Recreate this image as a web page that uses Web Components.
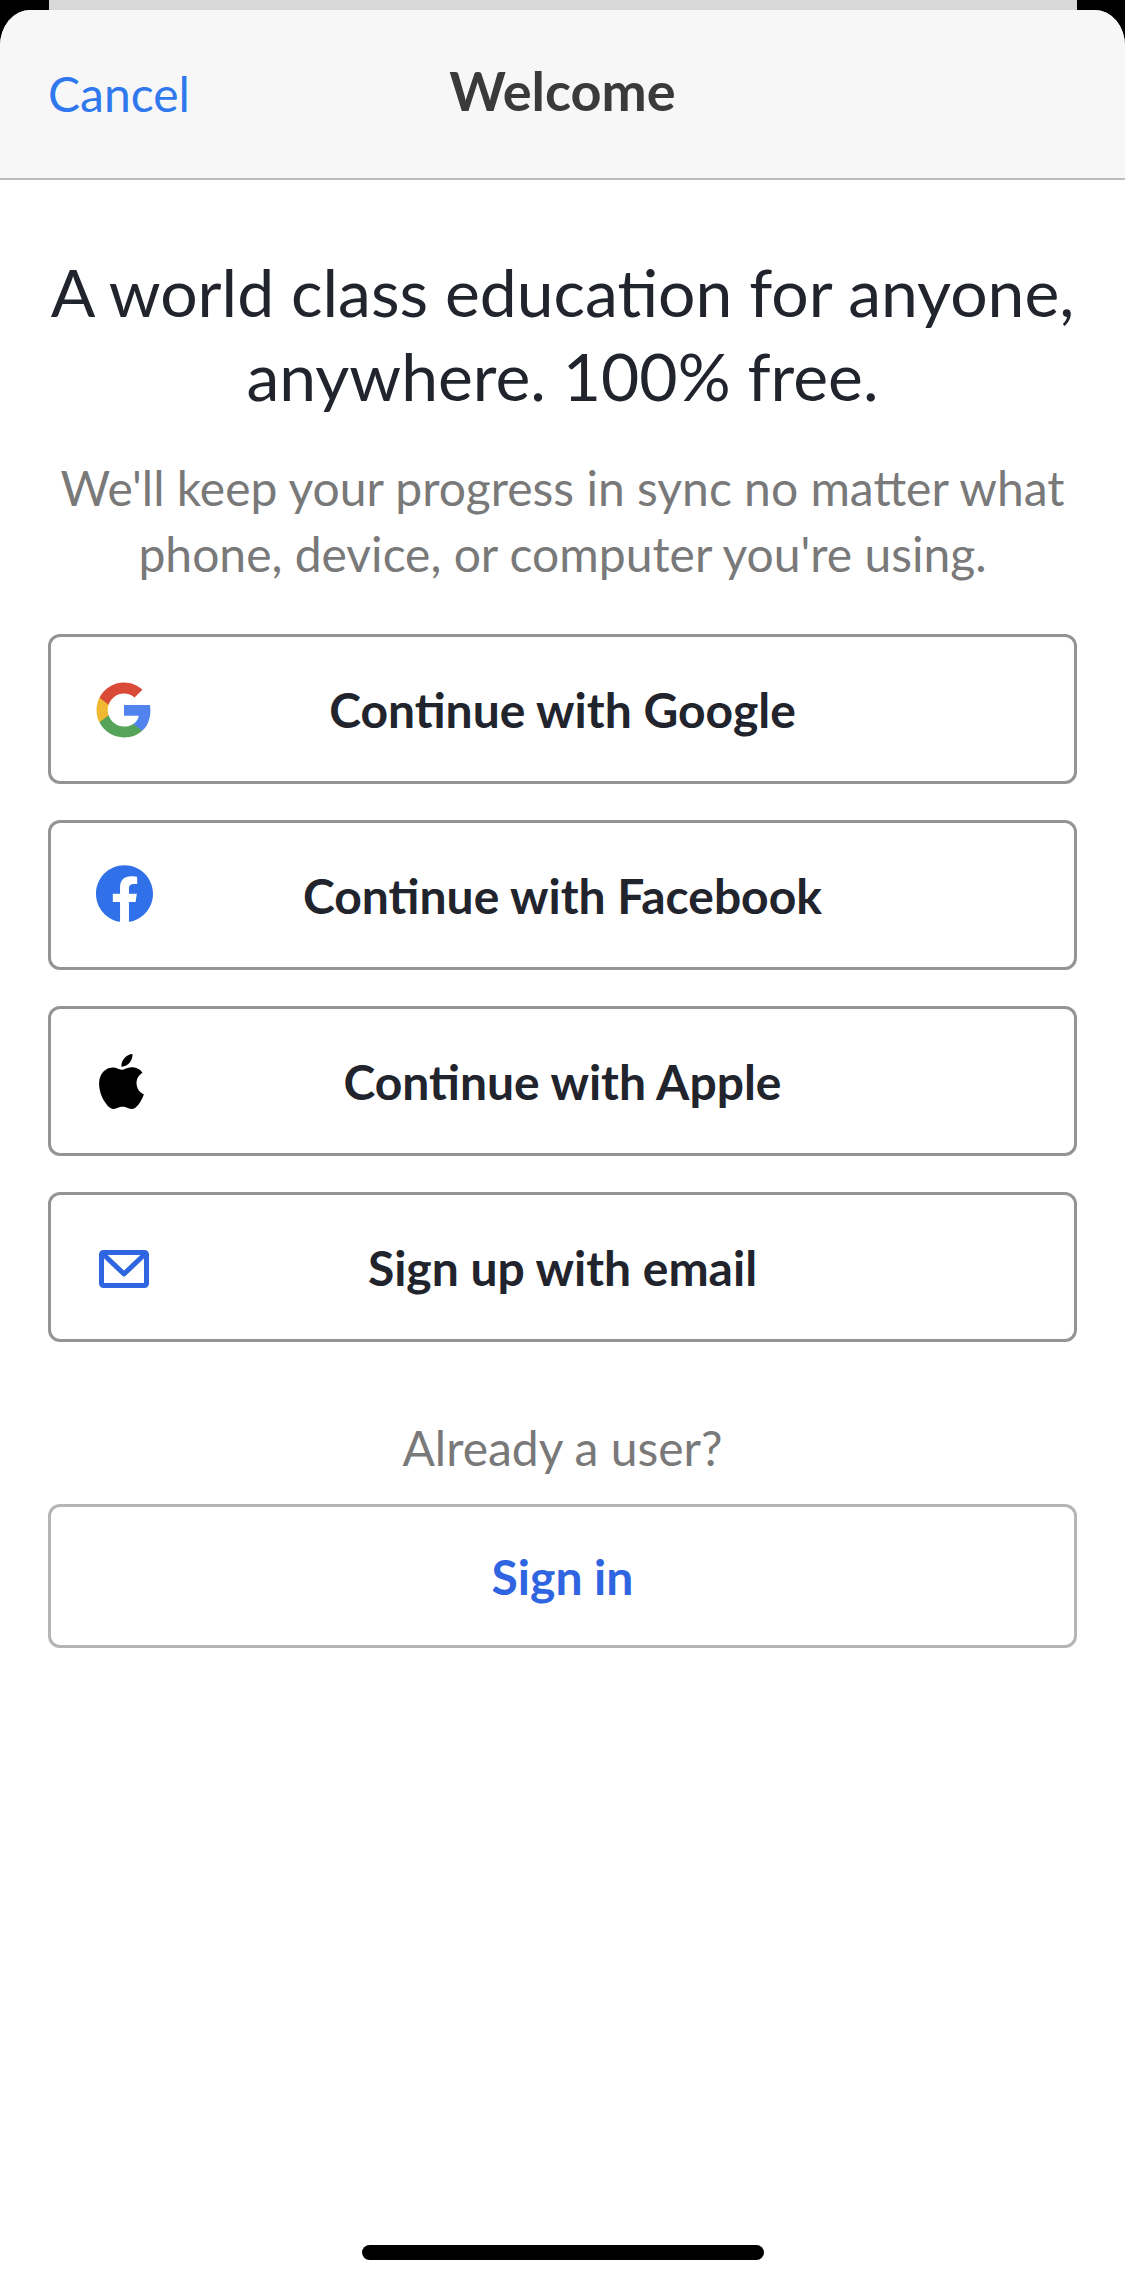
<!DOCTYPE html>
<html lang="en">
<head>
<meta charset="utf-8">
<title>Welcome</title>
<style>
html,body{margin:0;padding:0;background:#000;height:100%}
body{font-family:Lato,"Liberation Sans",sans-serif;-webkit-font-smoothing:antialiased}
</style>
</head>
<body>
<welcome-screen>
  <sheet-header slot="header" action="Cancel" title-text="Welcome"></sheet-header>
  <intro-copy></intro-copy>
  <auth-button label="Continue with Google">
    <svg slot="icon" width="60" height="60" viewBox="0 0 24 24" style="margin:2px 0 0 -1px"><path fill="#5083EE" d="M22.56 12.25c0-.78-.07-1.53-.2-2.25H12v4.26h5.92c-.26 1.37-1.04 2.53-2.21 3.31v2.77h3.57c2.08-1.92 3.28-4.74 3.28-8.09z"/><path fill="#55A45A" d="M12 23c2.97 0 5.46-.98 7.28-2.66l-3.57-2.77c-.98.66-2.23 1.06-3.71 1.06-2.86 0-5.29-1.93-6.16-4.53H2.18v2.84C3.99 20.53 7.7 23 12 23z"/><path fill="#F1B833" d="M5.84 14.09c-.22-.66-.35-1.36-.35-2.09s.13-1.43.35-2.09V7.07H2.18C1.43 8.55 1 10.22 1 12s.43 3.45 1.18 4.93l2.85-2.22.81-.62z"/><path fill="#D94B38" d="M12 5.38c1.62 0 3.06.56 4.21 1.64l3.15-3.15C17.45 2.09 14.97 1 12 1 7.7 1 3.99 3.47 2.18 7.07l3.66 2.84c.87-2.6 3.3-4.53 6.16-4.53z"/></svg>
  </auth-button>
  <auth-button label="Continue with Facebook">
    <svg slot="icon" width="57" height="57" viewBox="0 0 24 24" style="margin:0 0 3px 0"><path fill="#3070E8" d="M24 12.073c0-6.627-5.373-12-12-12s-12 5.373-12 12c0 5.99 4.388 10.954 10.125 11.854v-8.385H7.078v-3.47h3.047V9.43c0-3.007 1.792-4.669 4.533-4.669 1.312 0 2.686.235 2.686.235v2.953H15.83c-1.491 0-1.956.925-1.956 1.874v2.25h3.328l-.532 3.47h-2.796v8.385C19.612 23.027 24 18.062 24 12.073z"/></svg>
  </auth-button>
  <auth-button label="Continue with Apple">
    <svg slot="icon" width="55" height="55" viewBox="0 0 24 24" style="margin-right:5px"><path fill="#000" d="M12.152 6.896c-.948 0-2.415-1.078-3.96-1.04-2.04.027-3.91 1.183-4.961 3.014-2.117 3.675-.546 9.103 1.519 12.09 1.013 1.454 2.208 3.09 3.792 3.039 1.52-.065 2.09-.987 3.935-.987 1.831 0 2.35.987 3.96.948 1.637-.026 2.676-1.48 3.676-2.948 1.156-1.688 1.636-3.325 1.662-3.415-.039-.013-3.182-1.221-3.22-4.857-.026-3.04 2.48-4.494 2.597-4.559-1.429-2.09-3.623-2.324-4.39-2.376-2-.156-3.675 1.09-4.61 1.09zM15.53 3.83c.843-1.012 1.4-2.427 1.245-3.83-1.207.052-2.662.805-3.532 1.818-.78.896-1.454 2.338-1.273 3.714 1.338.104 2.715-.688 3.559-1.701"/></svg>
  </auth-button>
  <auth-button label="Sign up with email">
    <svg slot="icon" width="50" height="38" viewBox="0 0 50 38" style="margin:4px 0 0 0"><rect x="2.5" y="2.5" width="45" height="33" rx="2" fill="none" stroke="#2F65E0" stroke-width="5"/><path d="M4 4 25 24 46 4" fill="none" stroke="#2F65E0" stroke-width="5" stroke-linejoin="round"/></svg>
  </auth-button>
  <signin-block></signin-block>
  <home-indicator></home-indicator>
</welcome-screen>
<script>
class WelcomeScreen extends HTMLElement{
  constructor(){super();this.attachShadow({mode:'open'}).innerHTML=`
  <style>
    :host{display:flex;flex-direction:column;height:2284px;background:#000;overflow:hidden}
    .peek{height:10px;margin:0 48px 0 49px;background:#d8d8d8;flex:none}
    .sheet{flex:1;display:flex;flex-direction:column;background:#fff;border-radius:30px 30px 0 0 / 36px 36px 0 0;overflow:hidden}
    .content{flex:1;display:flex;flex-direction:column;gap:36px;padding:0 48px}
  </style>
  <div class="peek"></div>
  <div class="sheet">
    <slot name="header"></slot>
    <div class="content"><slot></slot></div>
  </div>`;}
}
class SheetHeader extends HTMLElement{
  connectedCallback(){
    const r=this.shadowRoot||this.attachShadow({mode:'open'});
    r.innerHTML=`
    <style>
      :host{display:grid;grid-template-columns:1fr auto 1fr;align-items:center;box-sizing:content-box;height:160px;padding:0 48px 8px;background:#f7f7f7;border-bottom:2px solid #bcbcbc}
      .a{font-size:48px;color:#2f78ed;justify-self:start;margin-top:6px}
      .t{font-size:54px;font-weight:700;color:#3a3a3a}
    </style>
    <span class="a">${this.getAttribute('action')}</span>
    <span class="t">${this.getAttribute('title-text')}</span><span></span>`;
  }
}
class IntroCopy extends HTMLElement{
  constructor(){super();this.attachShadow({mode:'open'}).innerHTML=`
  <style>
    :host{display:block;text-align:center;padding-top:70px;margin-bottom:11px}
    h1{margin:0;font-size:66px;line-height:84px;font-weight:400;color:#21242c;white-space:nowrap}
    p{margin:37px 0 0;font-size:48px;line-height:66px;color:#797979;white-space:nowrap}
  </style>
  <h1>A world class education for anyone,<br>anywhere. 100% free.</h1>
  <p>We'll keep your progress in sync no matter what<br>phone, device, or computer you're using.</p>`;}
}
class AuthButton extends HTMLElement{
  connectedCallback(){
    const r=this.shadowRoot||this.attachShadow({mode:'open'});
    r.innerHTML=`
    <style>
      :host{display:grid;grid-template-columns:146px 1fr 146px;align-items:center;height:150px;box-sizing:border-box;border:3px solid #949494;border-radius:12px;background:#fff}
      .i{display:flex;justify-content:center;align-items:center}
      .l{text-align:center;font-size:48px;font-weight:700;color:#21242c;white-space:nowrap}
    </style>
    <span class="i"><slot name="icon"></slot></span>
    <span class="l">${this.getAttribute('label')}</span><span></span>`;
  }
}
class SigninBlock extends HTMLElement{
  constructor(){super();this.attachShadow({mode:'open'}).innerHTML=`
  <style>
    :host{display:block;text-align:center;padding-top:41px}
    p{margin:0 0 27px;font-size:48px;line-height:58px;color:#797979}
    div{display:flex;align-items:center;justify-content:center;height:144px;box-sizing:border-box;border:3px solid #b5b5b5;border-radius:12px;font-size:48px;font-weight:700;color:#2f65e0}
  </style>
  <p>Already a user?</p>
  <div>Sign in</div>`;}
}
class HomeIndicator extends HTMLElement{
  constructor(){super();this.attachShadow({mode:'open'}).innerHTML=`
  <style>
    :host{display:block;width:402px;height:15px;margin:auto auto 24px;background:#000;border-radius:8px}
  </style>`;}
}
customElements.define('welcome-screen',WelcomeScreen);
customElements.define('sheet-header',SheetHeader);
customElements.define('intro-copy',IntroCopy);
customElements.define('auth-button',AuthButton);
customElements.define('signin-block',SigninBlock);
customElements.define('home-indicator',HomeIndicator);
</script>
</body>
</html>
